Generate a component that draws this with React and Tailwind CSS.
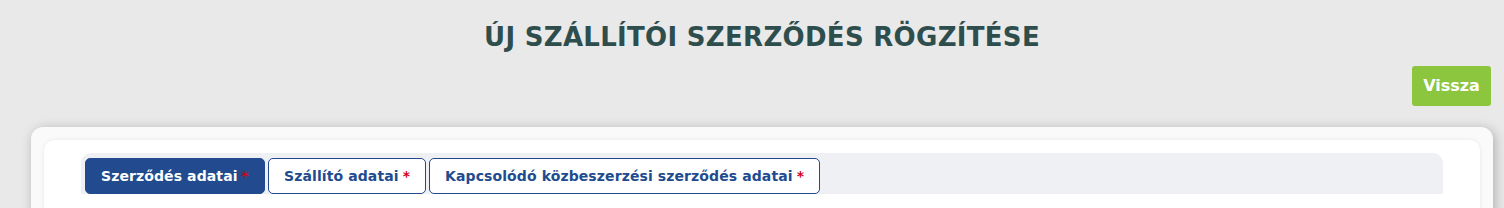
export default function App() {
  const tabs = [
    { label: "Szerződés adatai", active: true },
    { label: "Szállító adatai", active: false },
    { label: "Kapcsolódó közbeszerzési szerződés adatai", active: false },
  ];

  return (
    <div
      className="min-h-[208px] bg-[#e9e9e9] overflow-hidden"
      style={{ fontFamily: "'DejaVu Sans', sans-serif" }}
    >
      <h1 className="pt-[22px] pl-[20px] text-center text-[26px] leading-[30px] font-bold text-[#2e4d4d] tracking-[0.3px]">
        ÚJ SZÁLLÍTÓI SZERZŐDÉS RÖGZÍTÉSE
      </h1>

      <div className="flex justify-end pr-[13px] mt-[14px]">
        <button className="h-[40px] w-[79px] rounded-[3px] bg-[#8cc63f] text-white text-[16px] font-bold">
          Vissza
        </button>
      </div>

      <div className="ml-[31px] mr-[11px] mt-[21px] rounded-[12px] bg-[#fafafa] p-[13px] shadow-[2px_2px_12px_rgba(0,0,0,0.25)]">
        <div className="rounded-[10px] bg-white px-[37px] pt-[13px] pb-[40px] shadow-[0_0_4px_rgba(0,0,0,0.08)]">
          <div className="flex gap-[3px] rounded-t-[10px] bg-[#eff0f4] pl-[4px] pt-[5px]">
            {tabs.map((t) => (
              <div
                key={t.label}
                className={
                  t.active
                    ? "h-[36px] px-[15px] flex items-center rounded-[5px] border border-[#214b8e] bg-[#214b8e] text-white text-[14px] font-bold tracking-[0.1px]"
                    : "h-[36px] px-[15px] flex items-center rounded-[5px] border border-[#214b8e] bg-white text-[#214b8e] text-[14px] font-bold tracking-[0.1px]"
                }
              >
                {t.label}
                <span className="ml-[4px] text-[#d0021b]">*</span>
              </div>
            ))}
          </div>
        </div>
      </div>
    </div>
  );
}
